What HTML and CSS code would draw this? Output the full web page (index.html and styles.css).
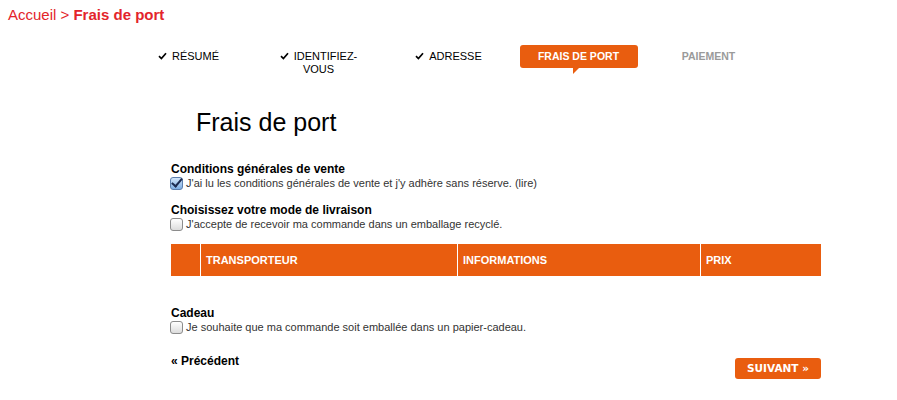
FILE: index.html
```html
<!DOCTYPE html>
<html>

<head>
  <title>Frais de port</title>
  <link rel="stylesheet" href="styles.css">
</head>

<body>
  <div class="breadcrumb">Accueil &gt; <strong>Frais de port</strong></div>

  <ul class="steps">
    <li class="step done"><span class="step-label"><svg class="check" width="9" height="8" viewBox="0 0 9 8"><path d="M1 4.2 L3.4 6.6 L8 1.2" /></svg>RÉSUMÉ</span></li>
    <li class="step done"><span class="step-label"><svg class="check" width="9" height="8" viewBox="0 0 9 8"><path d="M1 4.2 L3.4 6.6 L8 1.2" /></svg>IDENTIFIEZ-VOUS</span></li>
    <li class="step done"><span class="step-label"><svg class="check" width="9" height="8" viewBox="0 0 9 8"><path d="M1 4.2 L3.4 6.6 L8 1.2" /></svg>ADRESSE</span></li>
    <li class="step active"><span class="step-label">FRAIS DE PORT</span></li>
    <li class="step todo"><span class="step-label">PAIEMENT</span></li>
  </ul>

  <div class="content">
    <h1>Frais de port</h1>

    <h2>Conditions générales de vente</h2>
    <label class="check-row"><input type="checkbox" checked> J'ai lu les conditions générales de vente et j'y adhère sans réserve. (lire)</label>

    <h2 class="spaced">Choisissez votre mode de livraison</h2>
    <label class="check-row"><input type="checkbox"> J'accepte de recevoir ma commande dans un emballage recyclé.</label>

    <table class="carriers">
      <thead>
        <tr>
          <th class="col-select"></th>
          <th class="col-name">TRANSPORTEUR</th>
          <th class="col-info">INFORMATIONS</th>
          <th class="col-price">PRIX</th>
        </tr>
      </thead>
    </table>

    <h2 class="gift">Cadeau</h2>
    <label class="check-row"><input type="checkbox"> Je souhaite que ma commande soit emballée dans un papier-cadeau.</label>

    <div class="nav-buttons">
      <a class="prev" href="#">« Précédent</a>
      <a class="next" href="#">SUIVANT »</a>
    </div>
  </div>
</body>

</html>
```

FILE: styles.css
```css
body {
  font-family: 'Liberation Sans', Arial, sans-serif;
  background-color: #fff;
  color: #000;
  margin: 0;
  padding: 0;
}

.breadcrumb {
  padding: 6px 8px 0;
  font-size: 15px;
  line-height: 17px;
  color: #e3242b;
}

/* Order steps */
.steps {
  list-style: none;
  display: flex;
  align-items: flex-start;
  width: 650px;
  margin: 22px auto 0;
  padding: 0;
}

.step {
  flex: 0 0 130px;
  display: flex;
  justify-content: center;
}

.step-label {
  display: inline-block;
  max-width: 100px;
  padding: 5px 0;
  font-size: 11px;
  line-height: 13px;
  text-align: center;
  color: #000;
}

.check {
  margin-right: 5px;
  vertical-align: 0;
}

.check path {
  fill: none;
  stroke: #000;
  stroke-width: 1.7;
}

.step.active .step-label {
  position: relative;
  width: 118px;
  max-width: none;
  background-color: #e95d0f;
  border-radius: 3px;
  color: #fff;
  font-weight: bold;
  font-size: 10.5px;
}

.step.active .step-label::after {
  content: "";
  position: absolute;
  left: 53px;
  top: 100%;
  width: 0;
  height: 0;
  border-top: 6px solid #e95d0f;
  border-right: 6px solid transparent;
}

.step.todo .step-label {
  color: #9a9a9a;
  font-weight: bold;
  font-size: 10.5px;
}

/* Main content */
.content {
  width: 650px;
  margin-left: 171px;
}

h1 {
  font-size: 25px;
  font-weight: normal;
  line-height: 29px;
  margin: 27px 0 25px 25px;
}

h2 {
  font-size: 12px;
  font-weight: bold;
  line-height: 14px;
  margin: 0;
}

h2.spaced {
  margin-top: 13px;
}

h2.gift {
  margin-top: 30px;
}

.check-row {
  display: flex;
  align-items: center;
  font-size: 11px;
  line-height: 14px;
  color: #333;
  white-space: pre;
}

.check-row input {
  -webkit-appearance: none;
  appearance: none;
  position: relative;
  width: 13px;
  height: 13px;
  margin: 0 0 0 -1px;
  border: 1px solid #8c8c8c;
  border-radius: 3px;
  background: linear-gradient(#ffffff, #dcdcdc);
  box-sizing: border-box;
}

.check-row input:checked {
  border-color: #5d7fae;
  background: linear-gradient(#d3e6fa, #7eaee4);
}

.check-row input:checked::after {
  content: "";
  position: absolute;
  left: 3px;
  top: -2px;
  width: 4px;
  height: 9px;
  border-right: 2px solid #1d2c52;
  border-bottom: 2px solid #1d2c52;
  transform: rotate(40deg);
}

.carriers {
  width: 650px;
  margin-top: 13px;
  border-collapse: separate;
  border-spacing: 0;
}

.carriers th {
  height: 32px;
  padding: 0 0 0 5px;
  background-color: #e95d0f;
  color: #fff;
  font-size: 11px;
  font-weight: bold;
  text-align: left;
  vertical-align: middle;
  box-sizing: border-box;
}

.carriers th + th {
  border-left: 1px solid #fff;
}

.col-select {
  width: 29px;
}

.col-name {
  width: 257px;
}

.col-info {
  width: 243px;
}

.col-price {
  width: 121px;
}

.nav-buttons {
  display: flex;
  justify-content: space-between;
  align-items: flex-start;
  margin-top: 20px;
}

.prev {
  font-size: 12px;
  font-weight: bold;
  line-height: 14px;
  color: #000;
  text-decoration: none;
}

.next {
  margin-top: 4px;
  width: 86px;
  height: 21px;
  line-height: 21px;
  text-align: center;
  background-color: #e95d0f;
  border-radius: 3px;
  color: #fff;
  font-family: 'DejaVu Sans', Verdana, sans-serif;
  font-size: 10.5px;
  font-weight: bold;
  text-decoration: none;
}
```
